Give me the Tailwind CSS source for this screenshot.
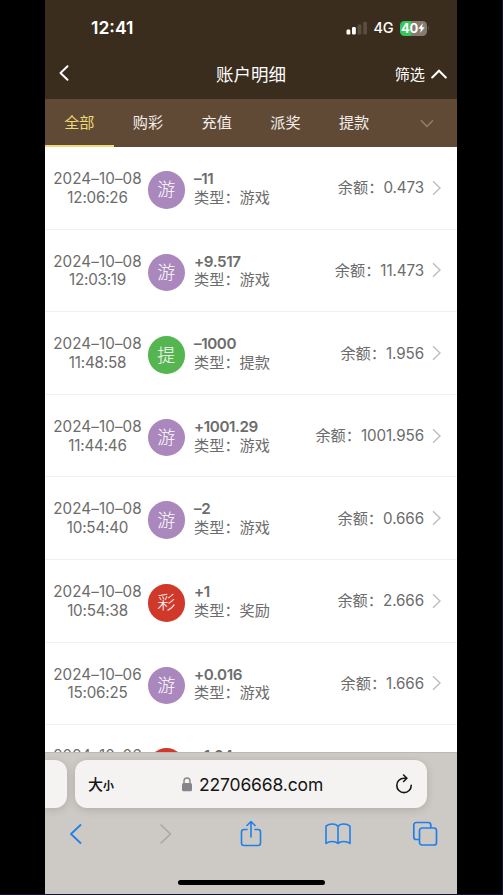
<!DOCTYPE html>
<html lang="zh-CN">
<head>
  <meta charset="UTF-8" />
  <title>账户明细</title>
  <meta name="viewport" content="width=device-width, initial-scale=1.0" />
  <script src="https://cdn.jsdelivr.net/npm/@tailwindcss/browser@4"></script>
</head>
<body class="bg-black h-[895px] overflow-hidden font-['Inter','Noto_Sans_CJK_SC',sans-serif] border-b border-r border-[#14122e]">

  <div class="w-[412px] h-[894px] ml-[45px] flex flex-col bg-white overflow-hidden">

    <!-- Status bar + title -->
    <header class="bg-[#3b2d1e] text-white h-[99px] shrink-0">
      <div class="h-[50px] pt-[6px] pl-[46px] pr-[28px] flex items-center justify-between">
        <span class="text-[17.5px] font-semibold">12:41</span>
        <div class="flex items-center">
          <svg class="w-[22px] h-[14px]" viewBox="0 0 22 14">
            <rect x="0.5" y="8.5" width="3.8" height="5" rx="1.2" fill="#fff" />
            <rect x="6" y="6" width="3.8" height="7.5" rx="1.2" fill="#fff" />
            <rect x="11.6" y="3.5" width="3.8" height="10" rx="1.2" fill="#5b4e41" />
            <rect x="17.2" y="0.7" width="3.8" height="12.8" rx="1.2" fill="#5b4e41" />
          </svg>
          <span class="ml-[6px] w-[20px] text-[14.5px] font-medium tracking-[-0.3px]">4G</span>
          <div class="ml-[6px] w-[27px] h-[15px] rounded-[4.5px] bg-linear-to-r from-[#34c759] from-40% to-[#857b70] to-40% flex items-center justify-center">
            <span class="text-[13px] font-bold leading-none tracking-[-0.4px]">40</span>
            <svg class="w-[7px] h-[10px]" viewBox="0 0 7 10"><path d="M4.8 0 0.3 5.800h2.600L2.200 10 6.700 4.200H4.100z" fill="#fff" /></svg>
          </div>
          <div class="ml-px w-[1.5px] h-[4px] rounded-r bg-[#5b4e41]"></div>
        </div>
      </div>
      <div class="h-[49px] pl-[13px] pr-[10px] grid grid-cols-[1fr_auto_1fr] items-center">
        <svg class="w-[12px] h-[16px] -mt-[4px]" viewBox="0 0 12 16" fill="none" stroke="#fff" stroke-width="1.900" stroke-linecap="round" stroke-linejoin="round"><path d="M9.500 1.200 2.500 8l7 6.800" /></svg>
        <h1 class="-ml-[3px] text-[17.5px] leading-none">账户明细</h1>
        <div class="flex items-center justify-end gap-[6px]">
          <span class="text-[15.2px] leading-none">筛选</span>
          <svg class="w-[16px] h-[10px]" viewBox="0 0 16 10" fill="none" stroke="#fff" stroke-width="2" stroke-linecap="round"><path d="M1.2 8.5 8 1.7l6.8 6.8" /></svg>
        </div>
      </div>
    </header>

    <!-- Tabs -->
    <nav class="h-[48px] shrink-0 bg-[#604a36] text-[#f3eeea] text-[15.2px] flex">
      <a class="w-[68.7px] pt-[2px] flex items-center justify-center text-[#eed975] border-b-2 border-[#f2d974]">全部</a>
      <a class="w-[68.7px] flex items-center justify-center">购彩</a>
      <a class="w-[68.7px] flex items-center justify-center">充值</a>
      <a class="w-[68.7px] flex items-center justify-center">派奖</a>
      <a class="w-[68.7px] flex items-center justify-center">提款</a>
      <span class="flex-1 pl-[8px] flex items-center justify-center">
        <svg class="w-[14px] h-[9px]" viewBox="0 0 14 9" fill="none" stroke="#94816f" stroke-width="1.3"><path d="M1 1.2 7 7.5l6-6.3" /></svg>
      </span>
    </nav>

    <!-- Records, rendered below -->
    <main id="recordList" class="h-[605px] shrink-0 overflow-hidden text-[#6c6c6c] text-[15.2px] leading-[18.7px]"></main>

    <!-- Browser toolbar -->
    <footer class="flex-1 bg-[#cdc9c4] border-t border-[#bcb8b3] pt-[7px] flex flex-col">
      <div class="flex gap-[8px]">
        <div class="w-[22px] h-[48px] bg-[#f5f3f2] rounded-r-[12px] shadow-[0_2px_8px_rgba(0,0,0,0.14)]"></div>
        <div class="w-[352px] h-[48px] bg-[#f5f3f2] rounded-[12px] shadow-[0_2px_8px_rgba(0,0,0,0.14)] text-[#151515] flex items-center pl-[13px] pr-[14px]">
          <span class="w-[93px] font-medium leading-none"><span class="text-[15px]">大</span><span class="text-[11px] font-bold">小</span></span>
          <svg class="w-[12px] h-[15px]" viewBox="0 0 12 15"><rect x="1" y="6" width="10" height="8.3" rx="1.5" fill="#85858a" /><path d="M3 6.500V4a3 3 0 0 1 6 0v2.500" fill="none" stroke="#85858a" stroke-width="1.400" /></svg>
          <span class="ml-[6px] pt-[2px] flex-1 text-[17.5px] tracking-[-0.15px]">22706668.com</span>
          <svg class="w-[18px] h-[20px]" viewBox="0 0 18 20" fill="none" stroke="#151515" stroke-width="1.600" stroke-linecap="round" stroke-linejoin="round"><path d="M11.200 4.200H9A7.200 7.200 0 1 0 16.200 11.400" /><path d="M8.600 1 11.900 4.300 8.600 7.500" /></svg>
        </div>
      </div>

      <div class="mt-[10px] h-[32px] pl-[23px] pr-[19px] flex items-center justify-between text-[#2080ea]">
        <svg class="w-[16px] h-[22px]" viewBox="0 0 16 22" fill="none" stroke="currentColor" stroke-width="1.800" stroke-linecap="round" stroke-linejoin="round"><path d="M12.500 2 3 11l9.500 9" /></svg>
        <svg class="w-[16px] h-[22px] ml-[9px] -mr-[3px]" viewBox="0 0 16 22" fill="none" stroke="#aaa6a2" stroke-width="1.600" stroke-linecap="round" stroke-linejoin="round"><path d="M4 2 13.500 11 4 20" /></svg>
        <svg class="w-[22px] h-[28px] ml-[6px] -mr-[6px]" viewBox="0 0 22 28" fill="none" stroke="currentColor" stroke-width="1.600" stroke-linecap="round" stroke-linejoin="round"><path d="M7 9.500H4a2.500 2.500 0 0 0-2.500 2.500v11A2.500 2.500 0 0 0 4 25.500h14a2.500 2.500 0 0 0 2.500-2.500V12A2.500 2.500 0 0 0 18 9.500h-3" /><path d="M11 17V1.700M7 5.500l4-4 4 4" /></svg>
        <svg class="w-[28px] h-[24px] ml-[5px] -mr-[4px]" viewBox="0 0 28 24" fill="none" stroke="currentColor" stroke-width="1.600" stroke-linecap="round" stroke-linejoin="round"><path d="M14 4.500C12 1.300 5.500 1 2 4.200V21.500c3-2.600 9.500-2.600 12 0 2.500-2.600 9-2.600 12 0V4.200C22.500 1 16 1.300 14 4.500zM14 4.500V21.300" /></svg>
        <svg class="w-[26px] h-[26px]" viewBox="0 0 26 26" fill="none" stroke="currentColor" stroke-width="1.700" stroke-linejoin="round"><rect x="7.500" y="7" width="17" height="17" rx="2.500" /><path d="M7.500 18.500H4.300a2.500 2.500 0 0 1-2.500-2.500V4a2.500 2.500 0 0 1 2.500-2.500h12a2.500 2.500 0 0 1 2.500 2.500v3" /></svg>
      </div>
      <div class="mt-auto mb-[9px] ml-[133px] w-[147px] h-[5px] rounded-full bg-black"></div>
    </footer>
  </div>

  <script>
    const colors = { '游': 'bg-[#aa88bd]', '提': 'bg-[#54b551]', '彩': 'bg-[#d0382a]' };

    // date, time, badge, amount, type, balance
    const records = [
      ['2024–10–08', '12:06:26', '游', '–11', '游戏', '0.473'],
      ['2024–10–08', '12:03:19', '游', '+9.517', '游戏', '11.473'],
      ['2024–10–08', '11:48:58', '提', '–1000', '提款', '1.956'],
      ['2024–10–08', '11:44:46', '游', '+1001.29', '游戏', '1001.956'],
      ['2024–10–08', '10:54:40', '游', '–2', '游戏', '0.666'],
      ['2024–10–08', '10:54:38', '彩', '+1', '奖励', '2.666'],
      ['2024–10–06', '15:06:25', '游', '+0.016', '游戏', '1.666'],
      ['2024–10–06', '15:04:12', '彩', '+1.64', '奖励', '1.650'],
    ];

    document.getElementById('recordList').innerHTML = records.map(([date, time, badge, amount, type, balance]) => `
      <div class="h-[82.6px] last:h-[80.6px] border-b border-[#f0f0f0] flex items-center pl-[4px] pr-[16px]">
        <div class="w-[97px] pt-[2px] text-center whitespace-nowrap"><div class="tracking-[0.1px]">${date}</div><div class="tracking-[-0.2px]">${time}</div></div>
        <div class="ml-[1.5px] mt-[4px] w-[37.5px] h-[37.5px] rounded-full ${colors[badge]} text-white text-[18px] font-light flex items-center justify-center"><span class="pt-[2px]">${badge}</span></div>
        <div class="ml-[9px] pt-[2px] flex-1 whitespace-nowrap">
          <div class="font-semibold tracking-[-0.4px]">${amount}</div>
          <div>类型：${type}</div>
        </div>
        <div class="pt-[2px] whitespace-nowrap">余额：<span class="tracking-[-0.1px]">${balance}</span></div>
        <svg class="ml-[8px] w-[9px] h-[16px]" viewBox="0 0 9 16" fill="none" stroke="#bdbdbd" stroke-width="1.400"><path d="M1 1.200 8 8l-7 6.800" /></svg>
      </div>`).join('');
  </script>
</body>
</html>
